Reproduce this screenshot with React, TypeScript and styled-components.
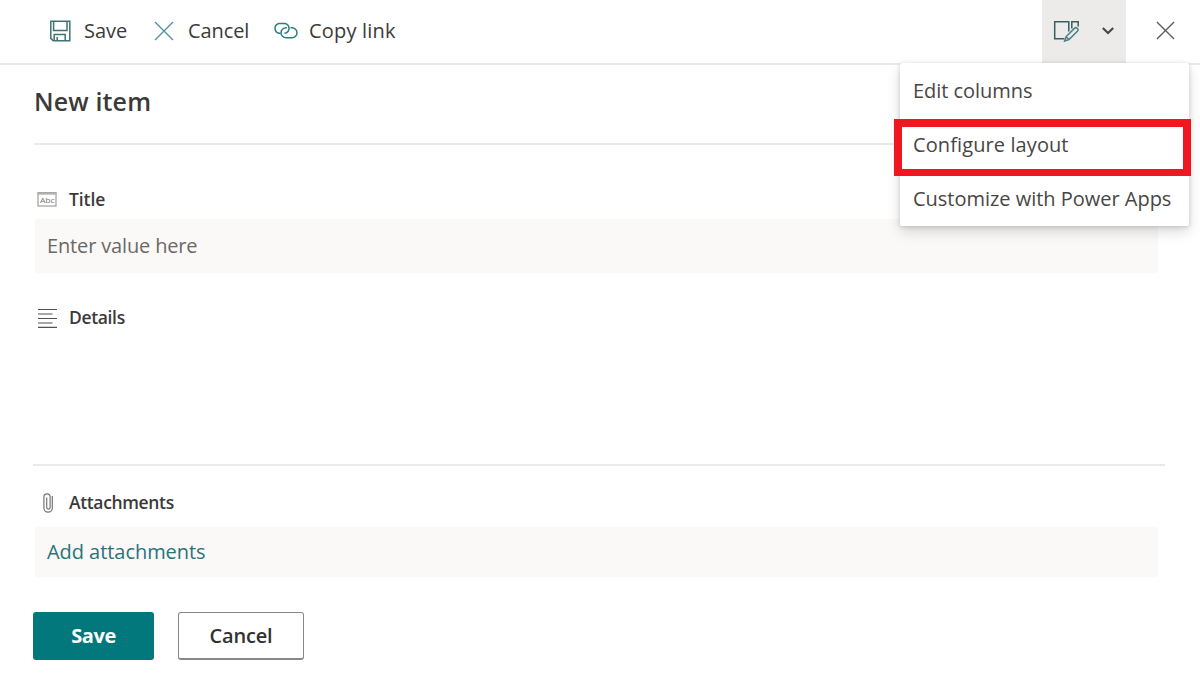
import React from "react";
import styled, { createGlobalStyle } from "styled-components";

const GlobalStyle = createGlobalStyle`
  * { box-sizing: border-box; }
  body {
    margin: 0;
    background: #ffffff;
    color: #3b3a39;
    font-family: "Open Sans", "Noto Sans", sans-serif;
  }
`;

const Page = styled.main`
  position: relative;
  width: 1200px;
  height: 684px;
  overflow: hidden;
  background: #ffffff;
`;

const Toolbar = styled.header`
  display: flex;
  align-items: stretch;
  height: 65px;
  padding-left: 49px;
  border-bottom: 2px solid #eaeaea;
`;

const Command = styled.button<{ $width: number; $gap: number; $tracking?: number }>`
  display: flex;
  align-items: center;
  gap: ${(p) => p.$gap}px;
  width: ${(p) => p.$width}px;
  padding: 0 0 2px;
  border: 0;
  background: transparent;
  color: #3b3a39;
  font: 400 20px "Open Sans", "Noto Sans", sans-serif;
  letter-spacing: ${(p) => p.$tracking ?? 0}px;
  white-space: nowrap;

  svg { flex: none; }
`;

const LayoutToggle = styled.button`
  display: flex;
  align-items: center;
  gap: 21px;
  width: 84px;
  margin-left: auto;
  padding: 0 0 2px 11px;
  border: 0;
  background: #edebe9;
`;

const CloseButton = styled.button`
  display: flex;
  align-items: center;
  width: 74px;
  padding: 0 0 2px 30px;
  border: 0;
  background: transparent;
`;

const Heading = styled.h1`
  height: 80px;
  margin: 0 34px;
  padding-top: 18px;
  border-bottom: 2px solid #eaeaea;
  font-size: 25px;
  font-weight: 600;
  line-height: 36px;
  letter-spacing: 0.15px;
`;

const Form = styled.form`
  padding: 0 42px 0 35px;
`;

const Label = styled.div<{ $top: number; $tracking?: number }>`
  display: flex;
  align-items: center;
  gap: 12px;
  height: 26px;
  margin-top: ${(p) => p.$top}px;
  padding-left: 2px;
  font-size: 17.5px;
  line-height: 24px;
  font-weight: 600;
  letter-spacing: ${(p) => p.$tracking ?? 0}px;
`;

const LabelText = styled.span`
  padding-bottom: 2px;
`;

const Field = styled.div<{ $height: number; $top: number; $link?: boolean; $tracking?: number }>`
  display: flex;
  align-items: center;
  height: ${(p) => p.$height}px;
  margin-top: ${(p) => p.$top}px;
  padding: 0 0 2px 12px;
  border-radius: 2px;
  background: #faf9f8;
  color: ${(p) => (p.$link ? "#2a7378" : "#6b6966")};
  font-size: 20px;
  letter-spacing: ${(p) => p.$tracking ?? 0}px;
`;

const DetailsArea = styled.div`
  height: 135px;
  margin: 0 -7px 0 -2px;
  border-bottom: 2px solid #eaeaea;
`;

const Actions = styled.div`
  display: flex;
  gap: 24px;
  margin: 35px 0 0 -2px;
`;

const ActionButton = styled.button<{ $primary?: boolean }>`
  width: ${(p) => (p.$primary ? 121 : 126)}px;
  height: 48px;
  padding: ${(p) => (p.$primary ? "0 0 2px" : "0")};
  border: ${(p) => (p.$primary ? "0" : "1px solid #8a8886")};
  border-bottom-width: ${(p) => (p.$primary ? 0 : 2)}px;
  border-radius: 3px;
  background: ${(p) => (p.$primary ? "#03787c" : "#ffffff")};
  color: ${(p) => (p.$primary ? "#ffffff" : "#323130")};
  font: ${(p) => (p.$primary ? 700 : 600)} 20px "Open Sans", "Noto Sans", sans-serif;
  letter-spacing: ${(p) => (p.$primary ? -0.4 : -0.2)}px;
`;

const Menu = styled.div`
  position: absolute;
  top: 63px;
  left: 900px;
  width: 289px;
  height: 163px;
  border-radius: 2px;
  background: #ffffff;
  box-shadow: 0 6px 14px rgba(0, 0, 0, 0.14), 0 1px 4px rgba(0, 0, 0, 0.16);
`;

const MenuItem = styled.div<{ $tracking: number }>`
  display: flex;
  align-items: center;
  height: 54.3px;
  padding-left: 13px;
  color: #484644;
  font-size: 20px;
  letter-spacing: ${(p) => p.$tracking}px;
  white-space: nowrap;
`;

const Highlight = styled.div`
  position: absolute;
  top: 119px;
  left: 894px;
  width: 297px;
  height: 57px;
  border: solid #f01820;
  border-width: 8px 8px 7px 8px;
`;

const SaveIcon = () => (
  <svg width="22" height="22" viewBox="0 0 22 22" fill="none" stroke="#3f7278" strokeWidth="1.5">
    <path d="M1.8 1.3H20.8V20.8H4.2L1.8 18.4Z" />
    <path d="M4.6 1.5V10.6H18V1.5M5.2 20.5V14.6H16.2V20.5M8.2 20.5V17" />
  </svg>
);

const CrossIcon = ({ color, size = 20 }: { color: string; size?: number }) => (
  <svg width={size} height={size} viewBox="0 0 20 20" fill="none" stroke={color} strokeWidth="1.4">
    <path d="M1 1L19 19M19 1L1 19" />
  </svg>
);

const LinkIcon = () => (
  <svg width="25" height="18" viewBox="0 0 25 18" fill="none" stroke="#2b7d82" strokeWidth="1.5">
    <path d="M7.5 11.2H6A5 5 0 0 1 6 1.4H12A5 5 0 0 1 12 11.2H11.4" />
    <path d="M17.4 5.8H19A5 5 0 0 1 19 15.8H13A5 5 0 0 1 13 5.8H13.8" />
  </svg>
);

const EditFormIcon = () => (
  <svg width="28" height="24" viewBox="0 0 28 24" fill="none" stroke="#375e62" strokeWidth="1.5">
    <path d="M11.4 19.8H1.7V2.7H15.8V12.5M18.8 9.5V2.7H25.2V7.5" />
    <path d="M11.6 22L13 17.8L21.4 9.4A1.9 1.9 0 0 1 24.4 12.2L16 20.6Z M13 17.8L16 20.6" stroke="#4b8088" />
  </svg>
);

const ChevronIcon = () => (
  <svg width="12" height="8" viewBox="0 0 12 8" fill="none" stroke="#4a4644" strokeWidth="2.1">
    <path d="M0.8 1L6 6L11.2 1" />
  </svg>
);

const AbcIcon = () => (
  <svg width="20" height="16" viewBox="0 0 20 16">
    <rect x="1" y="0.5" width="18" height="13.5" fill="none" stroke="#8c8b89" />
    <path d="M0.5 1.5H19.5" stroke="#b5b4b2" strokeWidth="2.4" />
    <text x="3" y="10.6" fontSize="8" fontWeight="400" textLength="14.5" lengthAdjust="spacingAndGlyphs" fill="#777">Abc</text>
  </svg>
);

const LinesIcon = () => (
  <svg width="20" height="20" viewBox="0 0 20 20" stroke="#545250" strokeWidth="1.2">
    <path d="M1 1.5H20M1 6H15.5M1 10.5H20M1 15H15.5M1 19.4H20" />
  </svg>
);

const ClipIcon = () => (
  <svg width="20" height="20" viewBox="0 0 20 20" fill="none" stroke="#777573" strokeWidth="1.2">
    <path d="M15.3 3V15A4.2 4.2 0 0 1 6.9 15V4A3.1 3.1 0 0 1 13.1 4V14.5A1.7 1.7 0 0 1 9.7 14.5V4.5" />
  </svg>
);

export default function App() {
  return (
    <Page>
      <GlobalStyle />
      <Toolbar>
        <Command $width={105} $gap={13}><SaveIcon />Save</Command>
        <Command $width={119} $gap={14} $tracking={-0.1}><CrossIcon color="#5393a0" />Cancel</Command>
        <Command $width={130} $gap={11} $tracking={0.2}><LinkIcon />Copy link</Command>
        <LayoutToggle><EditFormIcon /><ChevronIcon /></LayoutToggle>
        <CloseButton><CrossIcon color="#5d5b59" size={19} /></CloseButton>
      </Toolbar>
      <Heading>New item</Heading>
      <Form>
        <Label $top={42} $tracking={-0.1}><AbcIcon /><LabelText>Title</LabelText></Label>
        <Field $height={54} $top={6} $tracking={-0.15}>Enter value here</Field>
        <Label $top={32} $tracking={-0.35}><LinesIcon /><LabelText>Details</LabelText></Label>
        <DetailsArea />
        <Label $top={24} $tracking={-0.35}><ClipIcon /><LabelText>Attachments</LabelText></Label>
        <Field $height={50} $top={11} $link $tracking={-0.05}>Add attachments</Field>
        <Actions>
          <ActionButton type="button" $primary>Save</ActionButton>
          <ActionButton type="button">Cancel</ActionButton>
        </Actions>
      </Form>
      <Menu>
        <MenuItem $tracking={-0.05}>Edit columns</MenuItem>
        <MenuItem $tracking={0.1}>Configure layout</MenuItem>
        <MenuItem $tracking={-0.02}>Customize with Power Apps</MenuItem>
      </Menu>
      <Highlight />
    </Page>
  );
}
